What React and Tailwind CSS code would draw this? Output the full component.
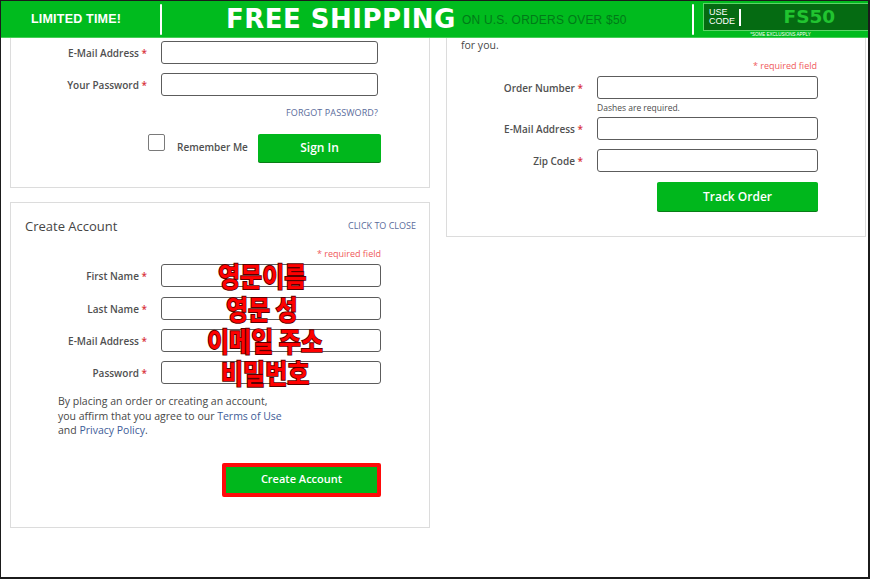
import React from "react";

function Req() {
  return <span className="text-[#d8343c]"> *</span>;
}

function Field({ label, inputW, overlay, overlayLeft, className = "" }) {
  return (
    <div className={"flex items-center " + className}>
      <div className="w-[136px] text-right text-[10px] font-semibold text-[#505050] leading-[14px] whitespace-nowrap">
        {label}
        <Req />
      </div>
      <div className="relative ml-[14px]">
        <div className={"h-[23px] border border-[#5c5c5c] rounded-[3px] bg-white " + inputW} />
        {overlay ? (
          <div
            className={
              "absolute top-1/2 -translate-y-1/2 scale-y-[1.14] whitespace-nowrap font-['Noto_Sans_CJK_KR',sans-serif] font-bold text-[24px] leading-none text-[#ff0000] [-webkit-text-stroke:1.6px_#5a0000] [paint-order:stroke_fill] " +
              overlayLeft
            }
          >
            {overlay}
          </div>
        ) : null}
      </div>
    </div>
  );
}

function GreenButton({ children, className = "" }) {
  return (
    <div
      className={
        "flex items-center justify-center bg-[#00b71c] rounded-[2px] text-white text-[12px] font-semibold shadow-[0_1px_0_#087d16] " +
        className
      }
    >
      {children}
    </div>
  );
}

function Divider() {
  return <div className="w-[2px] h-[31px] bg-white rounded-full" />;
}

function Banner() {
  return (
    <div className="h-[37px] bg-[#00bb1e] border-b border-[#45cf55] flex items-center overflow-hidden">
      <div className="ml-[30px] w-[129px] text-white font-['Liberation_Sans',sans-serif] font-bold text-[12.5px] leading-none tracking-[0.2px]">
        LIMITED TIME!
      </div>
      <Divider />
      <div className="ml-[64px] w-[236px] text-white font-['DejaVu_Sans',sans-serif] font-bold text-[26px] leading-none tracking-[0.5px] whitespace-nowrap">
        FREE SHIPPING
      </div>
      <div className="w-[230px] mt-[1px] text-[#007a18] font-['Liberation_Sans',sans-serif] text-[12px] leading-none tracking-[0.2px] whitespace-nowrap">
        ON U.S. ORDERS OVER $50
      </div>
      <Divider />
      <div className="ml-[9px] flex-1 self-start mt-[2px] flex flex-col">
        <div className="h-[28px] bg-[#056b12] border border-r-0 border-[#5cd468] flex items-center">
          <div className="ml-[5px] w-[26px] flex flex-col text-white font-['Liberation_Sans',sans-serif] text-[9px] leading-[9.5px]">
            <span>USE</span>
            <span>CODE</span>
          </div>
          <div className="ml-[4px] w-[1.5px] h-[17px] bg-white" />
          <div className="ml-[43px] text-[#21c430] font-['DejaVu_Sans',sans-serif] font-bold text-[18.5px] leading-none">
            FS50
          </div>
        </div>
        <div className="text-center text-white font-['Liberation_Sans',sans-serif] text-[4.5px] leading-none mt-[2px] pr-[10px]">
          *SOME EXCLUSIONS APPLY
        </div>
      </div>
    </div>
  );
}

function SignIn() {
  return (
    <div className="border-x border-b border-[#dcdcdc] pt-[3px] pb-[25px]">
      <Field label="E-Mail Address" inputW="w-[217px]" />
      <Field label="Your Password" inputW="w-[217px]" className="mt-[9px]" />
      <div className="ml-[150px] w-[217px] mt-[11px] text-right text-[9px] leading-[12px] text-[#5a6b9b] tracking-[0.1px]">
        FORGOT PASSWORD?
      </div>
      <div className="w-[370px] mt-[15px] flex items-start">
        <div className="ml-[137px] w-[17px] h-[17px] border border-[#7a7a7a] rounded-[2px] bg-white" />
        <div className="ml-[12px] mt-[6px] text-[10px] font-semibold text-[#505050] leading-[14px]">
          Remember Me
        </div>
        <GreenButton className="ml-auto w-[123px] h-[28px]">Sign In</GreenButton>
      </div>
    </div>
  );
}

function CreateAccount() {
  return (
    <div className="mt-[14px] border border-[#dcdcdc] pt-[14px] pb-[30px]">
      <div className="flex items-center justify-between pl-[14px] pr-[13px]">
        <div className="text-[13px] text-[#454545] leading-[18px]">Create Account</div>
        <div className="text-[9px] text-[#5a6b9b] leading-[12px]">CLICK TO CLOSE</div>
      </div>
      <div className="w-[370px] mt-[13px] text-right text-[9px] leading-[12px] text-[#ef5a5a]">
        * required field
      </div>
      <Field label="First Name" inputW="w-[220px]" className="mt-[4px]" overlay="영문이름" overlayLeft="left-[57px]" />
      <Field label="Last Name" inputW="w-[220px]" className="mt-[10px]" overlay="영문 성" overlayLeft="left-[65px]" />
      <Field label="E-Mail Address" inputW="w-[220px]" className="mt-[9px]" overlay="이메일 주소" overlayLeft="left-[46px]" />
      <Field label="Password" inputW="w-[220px]" className="mt-[9px]" overlay="비밀번호" overlayLeft="left-[60px]" />
      <div className="ml-[47px] mt-[10px] text-[10.5px] leading-[14.5px] text-[#474747]">
        By placing an order or creating an account,
        <br />
        you affirm that you agree to our <span className="text-[#3e5c98]">Terms of Use</span>
        <br />
        and <span className="text-[#3e5c98]">Privacy Policy</span>.
      </div>
      <div className="w-[370px] mt-[25px] flex justify-end">
        <div className="w-[159px] h-[34px] border-[4px] border-[#ff0a0a] rounded-[2px] bg-[#00b71c] flex items-center justify-center text-white text-[11px] font-semibold">
          Create Account
        </div>
      </div>
    </div>
  );
}

function TrackOrder() {
  return (
    <div className="w-[420px] self-start border-x border-b border-[#dcdcdc] pb-[25px]">
      <div className="pl-[14px] text-[10.5px] leading-[14px] text-[#474747]">for you.</div>
      <div className="w-[370px] mt-[8px] text-right text-[9px] leading-[12px] text-[#ef5a5a]">
        * required field
      </div>
      <Field label="Order Number" inputW="w-[221px]" className="mt-[4px]" />
      <div className="ml-[150px] mt-[3px] text-[8.5px] leading-[12px] text-[#4a4a4a]">Dashes are required.</div>
      <Field label="E-Mail Address" inputW="w-[221px]" className="mt-[3px]" />
      <Field label="Zip Code" inputW="w-[221px]" className="mt-[9px]" />
      <div className="w-[371px] mt-[10px] flex justify-end">
        <GreenButton className="w-[161px] h-[29px]">Track Order</GreenButton>
      </div>
    </div>
  );
}

export default function App() {
  return (
    <div className="w-[870px] h-[579px] overflow-hidden bg-white border-t border-l border-r-2 border-b-2 border-[#1b1b1b] font-['Open_Sans',sans-serif]">
      <Banner />
      <div className="flex gap-[16px] pl-[9px]">
        <div className="w-[420px] flex flex-col">
          <SignIn />
          <CreateAccount />
        </div>
        <TrackOrder />
      </div>
    </div>
  );
}
